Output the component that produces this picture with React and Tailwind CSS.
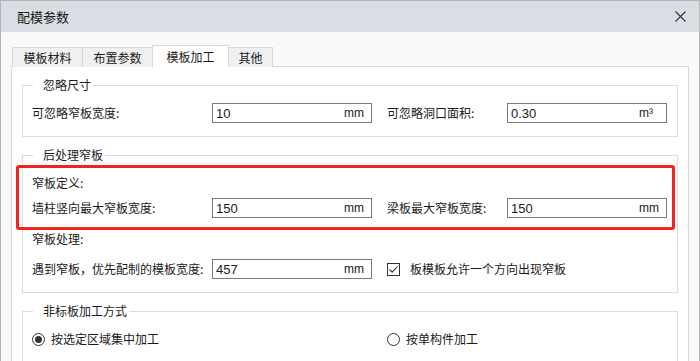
import React from "react";

function Input({ value, unit, pr = "pr-[7px]" }) {
  return (
    <div className={`h-[20px] w-[160px] border border-[#7a7a7a] bg-white flex items-center justify-between pl-[3px] ${pr} shrink-0`}>
      <span className="text-[13px] font-['Liberation_Sans',sans-serif] text-[#1a1a1a] leading-none">{value}</span>
      <span className="text-[12px] font-['Liberation_Sans',sans-serif] text-[#1a1a1a] leading-none">{unit}</span>
    </div>
  );
}

function Label({ children, w }) {
  return <div className={`${w} shrink-0 whitespace-nowrap leading-[20px]`}>{children}</div>;
}

function Group({ title, children, className = "" }) {
  return (
    <fieldset className={`border border-[#dcdcdc] m-0 p-0 ${className}`}>
      <legend className="ml-[10px] pl-[10px] pr-[2px] leading-[16px] text-[12px]">{title}</legend>
      {children}
    </fieldset>
  );
}

export default function App() {
  return (
    <div className="relative w-[700px] h-[361px] overflow-hidden bg-[#f9f9f9] border-l border-t border-r border-[#b4b4b4] font-['Noto_Sans_CJK_SC','Noto_Sans',sans-serif] text-[12px] text-[#1a1a1a]">
      <div className="h-[31px] bg-[#d9dde4] flex items-center justify-between pl-[16px] pr-[13px]">
        <span className="text-[13px]">配模参数</span>
        <svg width="11" height="11" viewBox="0 0 11 11">
          <path d="M0.5 0.5 L10.5 10.5 M10.5 0.5 L0.5 10.5" stroke="#333" strokeWidth="1.1" fill="none" />
        </svg>
      </div>
      <div className="pt-[13px] pl-[10px] pr-[10px]">
        <div className="flex items-end h-[22px] pl-[1px]">
          <div className="w-[71px] h-[20px] border border-b-0 border-[#d9d9d9] bg-[#f0f0f0] flex items-center justify-center">模板材料</div>
          <div className="-ml-px w-[71px] h-[20px] border border-b-0 border-[#d9d9d9] bg-[#f0f0f0] flex items-center justify-center">布置参数</div>
          <div className="-ml-px w-[77px] h-[22px] border border-b-0 border-[#d9d9d9] bg-white flex items-center justify-center relative z-10">模板加工</div>
          <div className="-ml-px w-[45px] h-[20px] border border-b-0 border-[#d9d9d9] bg-[#f0f0f0] flex items-center justify-center">其他</div>
        </div>
        <div className="-mt-px border border-[#d9d9d9] bg-white px-[10px] h-[400px] pt-[10px]">
          <Group title="忽略尺寸">
            <div className="flex items-center h-[20px] mt-[10px] mb-[13px] pl-[9px]">
              <Label w="w-[180px]">可忽略窄板宽度:</Label>
              <Input value="10" unit="mm" />
              <div className="ml-[15px]"><Label w="w-[120px]">可忽略洞口面积:</Label></div>
              <Input value="0.30" unit="m³" pr="pr-[13px]" />
            </div>
          </Group>
          <Group title="后处理窄板" className="mt-[10px]">
            <div className="pl-[9px]">
              <div className="mt-[10px] leading-[20px] h-[20px]">窄板定义:</div>
              <div className="flex items-center h-[20px] mt-[5px]">
                <Label w="w-[180px]">墙柱竖向最大窄板宽度:</Label>
                <Input value="150" unit="mm" />
                <div className="ml-[15px]"><Label w="w-[120px]">梁板最大窄板宽度:</Label></div>
                <Input value="150" unit="mm" />
              </div>
              <div className="mt-[11px] leading-[20px] h-[20px]">窄板处理:</div>
              <div className="flex items-center h-[20px] mt-[10px] mb-[13px]">
                <Label w="w-[180px]">遇到窄板，优先配制的模板宽度:</Label>
                <Input value="457" unit="mm" />
                <div className="ml-[15px] flex items-center">
                  <div className="w-[13px] h-[13px] border border-[#333] bg-white flex items-center justify-center">
                    <svg width="11" height="11" viewBox="0 0 11 11">
                      <path d="M1.5 5.5 L4.2 8.2 L9.5 2.5" stroke="#333" strokeWidth="1.1" fill="none" />
                    </svg>
                  </div>
                  <span className="ml-[10px] whitespace-nowrap">板模板允许一个方向出现窄板</span>
                </div>
              </div>
            </div>
          </Group>
          <Group title="非标板加工方式" className="mt-[10px]">
            <div className="flex items-center h-[20px] mt-[10px] mb-[20px] pl-[9px]">
              <div className="w-[355px] flex items-center shrink-0">
                <div className="w-[13px] h-[13px] rounded-full border border-[#333] flex items-center justify-center">
                  <div className="w-[7px] h-[7px] rounded-full bg-[#333]"></div>
                </div>
                <span className="ml-[6px]">按选定区域集中加工</span>
              </div>
              <div className="flex items-center">
                <div className="w-[13px] h-[13px] rounded-full border border-[#333] bg-white"></div>
                <span className="ml-[6px]">按单构件加工</span>
              </div>
            </div>
          </Group>
        </div>
      </div>
      <div className="absolute left-[15px] top-[164px] w-[659px] h-[65px] border-[3px] border-[#f5211b] rounded-[3px]"></div>
    </div>
  );
}
